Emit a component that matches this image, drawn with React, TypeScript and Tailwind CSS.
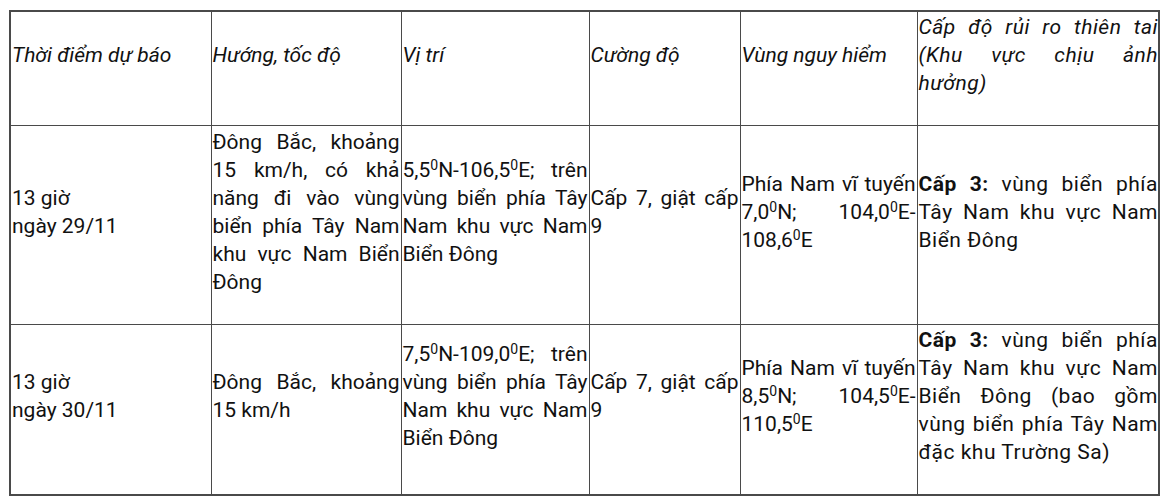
const cell = 'border border-[#4a4a4a] align-middle text-justify pt-[1px] pb-[28px] px-[1px]';
// last column wraps a little earlier in the source, its text runs up to the border
const lastCell = 'border border-[#4a4a4a] align-middle text-justify pt-[1px] pb-[28px] pl-[1px] pr-0 tracking-[0.5px]';

function Deg() {
  return <sup className="text-[14px] tracking-normal">0</sup>;
}

export default function App() {
  return (
    <div className="bg-white min-h-[502px] pl-[9px] pt-[10px] font-['Roboto',sans-serif] text-[21px] leading-[28px] text-[#111]">
      <table className="table-fixed border-collapse border-2 border-[#4a4a4a] w-[1149px]">
        <colgroup>
          <col className="w-[201px]" />
          <col className="w-[190px]" />
          <col className="w-[188px]" />
          <col className="w-[151px]" />
          <col className="w-[177px]" />
          <col className="w-[242px]" />
        </colgroup>
        <tbody>
          <tr className="h-[114px] italic">
            <td className={cell}>Thời điểm dự báo</td>
            <td className={cell}>Hướng, tốc độ</td>
            <td className={cell}>Vị trí</td>
            <td className={cell}>Cường độ</td>
            <td className={cell}>Vùng nguy hiểm</td>
            <td className={lastCell}>Cấp độ rủi ro thiên tai (Khu vực chịu ảnh hưởng)</td>
          </tr>
          <tr className="h-[199px]">
            <td className={cell}>
              13 giờ
              <br />
              ngày 29/11
            </td>
            <td className={cell}>Đông Bắc, khoảng 15 km/h, có khả năng đi vào vùng biển phía Tây Nam khu vực Nam Biển Đông</td>
            <td className={cell}>
              5,5<Deg />N-106,5<Deg />E; trên vùng biển phía Tây Nam khu vực Nam Biển Đông
            </td>
            <td className={cell}>Cấp 7, giật cấp 9</td>
            <td className={cell}>
              Phía Nam vĩ tuyến 7,0<Deg />N; 104,0<Deg />E-108,6<Deg />E
            </td>
            <td className={lastCell}>
              <b>Cấp 3:</b> vùng biển phía Tây Nam khu vực Nam Biển Đông
            </td>
          </tr>
          <tr className="h-[170px]">
            <td className={cell}>
              13 giờ
              <br />
              ngày 30/11
            </td>
            <td className={cell}>Đông Bắc, khoảng 15 km/h</td>
            <td className={cell}>
              7,5<Deg />N-109,0<Deg />E; trên vùng biển phía Tây Nam khu vực Nam Biển Đông
            </td>
            <td className={cell}>Cấp 7, giật cấp 9</td>
            <td className={cell}>
              Phía Nam vĩ tuyến 8,5<Deg />N; 104,5<Deg />E-110,5<Deg />E
            </td>
            <td className={lastCell}>
              <b>Cấp 3:</b> vùng biển phía Tây Nam khu vực Nam Biển Đông (bao gồm vùng biển phía Tây Nam đặc khu Trường Sa)
            </td>
          </tr>
        </tbody>
      </table>
    </div>
  );
}
